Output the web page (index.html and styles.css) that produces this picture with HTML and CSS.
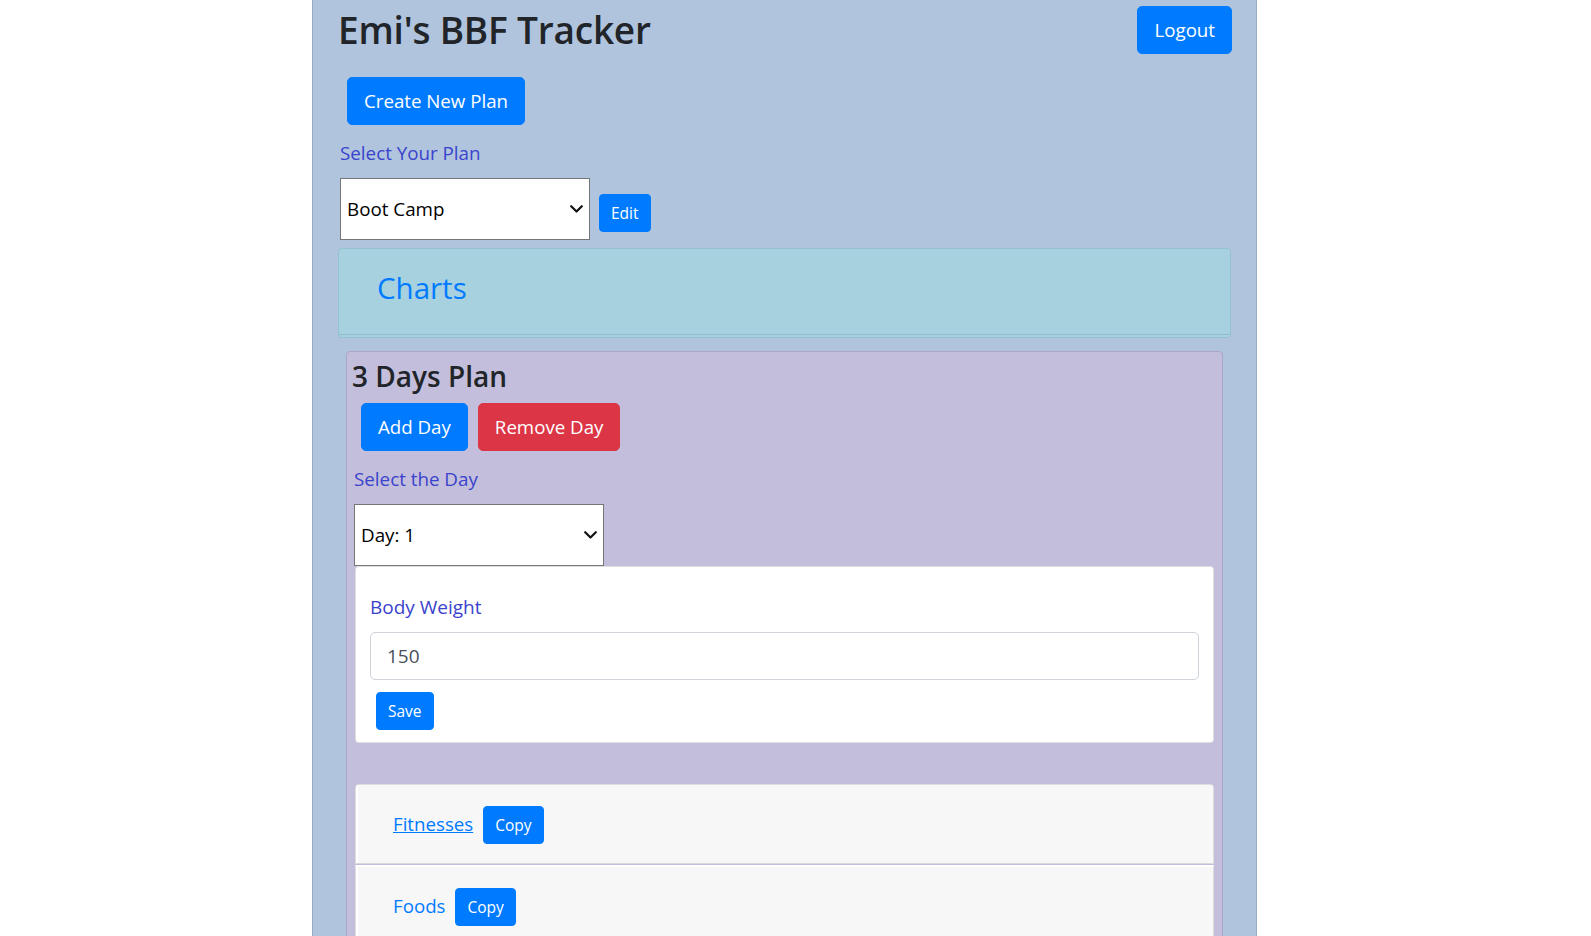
FILE: index.html
```html
<!DOCTYPE html>
<html lang="en">
<head>
<meta charset="utf-8">
<title>Emi's BBF Tracker</title>
<link rel="stylesheet" href="styles.css">
</head>
<body>
<div class="app">
  <header class="topbar">
    <h1 class="title">Emi's BBF Tracker</h1>
    <button class="btn btn-lg">Logout</button>
  </header>

  <div class="create-row">
    <button class="btn btn-lg">Create New Plan</button>
  </div>

  <label class="field-label">Select Your Plan</label>
  <div class="plan-row">
    <div class="select">
      <span>Boot Camp</span>
      <svg class="chev" width="13" height="8" viewBox="0 0 13 8"><path d="M1.2 1.2 L6.5 6.5 L11.8 1.2" fill="none" stroke="#111" stroke-width="2.2" stroke-linecap="round" stroke-linejoin="round"/></svg>
    </div>
    <button class="btn btn-edit">Edit</button>
  </div>

  <section class="charts">
    <div class="charts-header">
      <h2 class="charts-title">Charts</h2>
    </div>
  </section>

  <section class="plan-panel">
    <h3 class="plan-title">3 Days Plan</h3>
    <div class="day-actions">
      <button class="btn btn-lg">Add Day</button>
      <button class="btn btn-lg btn-danger">Remove Day</button>
    </div>
    <label class="field-label day-label">Select the Day</label>
    <div class="select">
      <span>Day: 1</span>
      <svg class="chev" width="13" height="8" viewBox="0 0 13 8"><path d="M1.2 1.2 L6.5 6.5 L11.8 1.2" fill="none" stroke="#111" stroke-width="2.2" stroke-linecap="round" stroke-linejoin="round"/></svg>
    </div>

    <div class="weight-card">
      <label class="card-label">Body Weight</label>
      <div class="input">150</div>
      <button class="btn btn-save">Save</button>
    </div>

    <div class="accordion">
      <div class="acc-item">
        <a class="acc-link underline" href="#">Fitnesses</a>
        <button class="btn">Copy</button>
      </div>
      <div class="acc-item">
        <a class="acc-link" href="#">Foods</a>
        <button class="btn">Copy</button>
      </div>
    </div>
  </section>
</div>
</body>
</html>
```

FILE: styles.css
```css
* { box-sizing: border-box; }

html, body {
  margin: 0;
  height: 100%;
  overflow: hidden;
}

body {
  font-family: "Open Sans", "Noto Sans", sans-serif;
  background: #fff;
  color: #212529;
  padding-right: 22px;
}

.app {
  width: 945px;
  min-height: 100vh;
  margin: 0 auto;
  background: #b0c4de;
  border-left: 1px solid #9aabc6;
  border-right: 1px solid #9aabc6;
  padding: 6px 24px 0 25px;
}

.topbar {
  display: flex;
  justify-content: space-between;
  align-items: flex-start;
}

.title {
  margin: 0;
  font-size: 37px;
  line-height: 48px;
  font-weight: 600;
  color: #212529;
  letter-spacing: -0.2px;
}

.btn {
  font-family: inherit;
  font-size: 15.5px;
  line-height: 24px;
  padding: 6px 11px;
  border: 1px solid #007bff;
  border-radius: 4px;
  background: #007bff;
  color: #fff;
  cursor: pointer;
}

.btn-lg {
  font-size: 18.7px;
  line-height: 30px;
  padding: 8px 16px;
  border-radius: 5px;
}

.btn-danger {
  background: #dc3545;
  border-color: #dc3545;
}

.create-row {
  margin: 23px 0 0 9px;
}

.field-label {
  display: block;
  font-size: 18.8px;
  line-height: 30px;
  color: #3a43cc;
  margin: 13px 0 10px 2px;
}

.plan-row {
  display: flex;
  align-items: flex-end;
  gap: 9px;
  margin-left: 2px;
}

.select {
  width: 250px;
  height: 62px;
  background: #fff;
  border: 1px solid #767676;
  display: flex;
  align-items: center;
  justify-content: space-between;
  padding: 0 6px 0 6px;
  font-size: 18.8px;
  color: #000;
}

.btn-edit {
  margin-bottom: 8px;
}

.charts {
  margin: 8px 1px 0 0;
  background: #a7d1de;
  border: 1px solid #93c3d0;
  border-radius: 4px;
  padding-bottom: 2px;
}

.charts-header {
  padding: 20px 38px 27px;
  border-bottom: 1px solid #8fbdcb;
}

.charts-title {
  margin: 0;
  font-size: 29.5px;
  line-height: 38px;
  font-weight: 500;
  color: #007bff;
}

.plan-panel {
  margin: 13px 9px 0 8px;
  background: #c3bedb;
  border: 1px solid #aca5cb;
  border-radius: 4px;
  padding: 7px 8px 40px 7px;
  min-height: 700px;
}

.plan-title {
  margin: 0 0 0 -2px;
  font-size: 28px;
  line-height: 35px;
  font-weight: 600;
  color: #212529;
}

.day-actions {
  display: flex;
  gap: 10px;
  margin: 9px 0 0 7px;
}

.day-label {
  margin-left: 0;
}

.weight-card {
  background: #fff;
  border: 1px solid rgba(0, 0, 0, 0.125);
  border-radius: 4px;
  padding: 25px 14px 12px;
  margin-left: 1px;
}

.card-label {
  display: block;
  font-size: 19px;
  line-height: 30px;
  color: #3a43cc;
  margin-bottom: 10px;
}

.input {
  height: 48px;
  border: 1px solid #ced4da;
  border-radius: 5px;
  padding: 0 16px;
  display: flex;
  align-items: center;
  font-size: 19px;
  color: #495057;
}

.btn-save {
  margin: 12px 0 0 6px;
}

.accordion {
  margin: 41px 0 0 1px;
}

.acc-item {
  display: flex;
  align-items: baseline;
  gap: 10px;
  background: #f7f7f7;
  border: 1px solid rgba(0, 0, 0, 0.1);
  border-bottom-color: #dadada;
  padding: 21px 20px 19px 37px;
  box-shadow: inset 2px 0 0 #fff;
}

.acc-item:first-child {
  border-radius: 4px 4px 0 0;
}

.acc-item + .acc-item {
  margin-top: 1px;
  border-top: 2px solid #fff;
}

.acc-link {
  font-size: 18.7px;
  line-height: 30px;
  color: #007bff;
  text-decoration: none;
}

.acc-link.underline {
  text-decoration: underline;
}
```
